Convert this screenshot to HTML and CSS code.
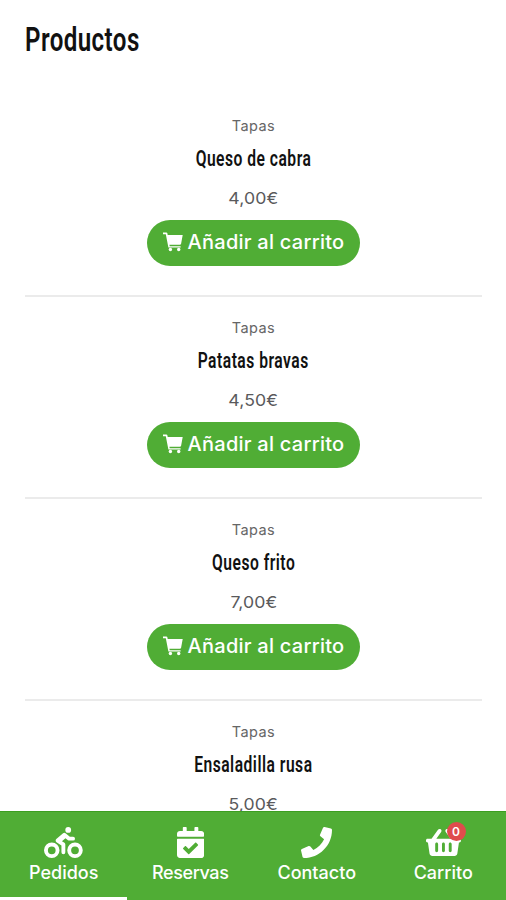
FILE: index.html
```html
<!DOCTYPE html>
<html lang="es">
<head>
<meta charset="utf-8">
<title>Productos</title>
<link rel="stylesheet" href="styles.css">
</head>
<body>
<svg class="sprite" aria-hidden="true">
  <symbol id="cart" viewBox="0 0 20 20"><path d="M0 .4H3.4Q4.1.4 4.3 1.1L4.7 3H19.7L18.1 11.8Q17.9 12.8 16.8 12.8H6.4L6.7 14.2H17.6V15.4H5.4L2.8 2.2H0Z"/><circle cx="7.4" cy="17.5" r="1.7"/><circle cx="15.7" cy="17.5" r="1.7"/></symbol>
</svg>
<main class="page">
  <h1 class="title"><span>Productos</span></h1>
  <article class="product">
    <p class="category">Tapas</p>
    <h2 class="name"><span>Queso de cabra</span></h2>
    <p class="price">4,00€</p>
    <button class="add"><svg><use href="#cart"/></svg><span>Añadir al carrito</span></button>
  </article>
  <article class="product">
    <p class="category">Tapas</p>
    <h2 class="name"><span>Patatas bravas</span></h2>
    <p class="price">4,50€</p>
    <button class="add"><svg><use href="#cart"/></svg><span>Añadir al carrito</span></button>
  </article>
  <article class="product">
    <p class="category">Tapas</p>
    <h2 class="name"><span>Queso frito</span></h2>
    <p class="price">7,00€</p>
    <button class="add"><svg><use href="#cart"/></svg><span>Añadir al carrito</span></button>
  </article>
  <article class="product">
    <p class="category">Tapas</p>
    <h2 class="name"><span>Ensaladilla rusa</span></h2>
    <p class="price">5,00€</p>
  </article>
</main>
<nav class="tabs">
  <a class="tab active">
    <svg class="icon" viewBox="0 0 640 512"><path d="M400 96a48 48 0 1 0-48-48 48 48 0 0 0 48 48zm-4 121a31.9 31.9 0 0 0 20 7h64a32 32 0 0 0 0-64h-52.78L356 103a31.94 31.94 0 0 0-40.81.68l-112 96a32 32 0 0 0 3.08 50.92L288 305.12V416a32 32 0 0 0 64 0V288a32 32 0 0 0-14.25-26.62l-41.36-27.57 58.25-49.92zm116 39a128 128 0 1 0 128 128 128 128 0 0 0-128-128zm0 192a64 64 0 1 1 64-64 64 64 0 0 1-64 64zM128 256a128 128 0 1 0 128 128 128 128 0 0 0-128-128zm0 192a64 64 0 1 1 64-64 64 64 0 0 1-64 64z"/></svg>
    <span>Pedidos</span>
  </a>
  <a class="tab">
    <svg class="icon" viewBox="0 0 448 512"><path d="M436 160H12c-6.627 0-12-5.373-12-12v-36c0-26.51 21.49-48 48-48h48V12c0-6.627 5.373-12 12-12h40c6.627 0 12 5.373 12 12v52h128V12c0-6.627 5.373-12 12-12h40c6.627 0 12 5.373 12 12v52h48c26.51 0 48 21.49 48 48v36c0 6.627-5.373 12-12 12zM12 192h424c6.627 0 12 5.373 12 12v260c0 26.51-21.49 48-48 48H48c-26.51 0-48-21.49-48-48V204c0-6.627 5.373-12 12-12zm333.296 95.947l-28.169-28.398c-4.667-4.705-12.265-4.736-16.97-.068L194.12 364.665l-45.98-46.352c-4.667-4.705-12.266-4.736-16.971-.068l-28.397 28.17c-4.705 4.667-4.736 12.265-.068 16.97l82.601 83.269c4.667 4.705 12.265 4.736 16.97.068l142.953-141.805c4.705-4.667 4.736-12.265.068-16.97z"/></svg>
    <span class="tight">Reservas</span>
  </a>
  <a class="tab">
    <svg class="icon" viewBox="0 0 512 512"><path d="M493.4 24.6l-104-24c-11.3-2.6-22.9 3.3-27.5 13.9l-48 112c-4.2 9.8-1.4 21.3 6.9 28l60.6 49.6c-36 76.7-98.9 140.5-177.2 177.2l-49.6-60.6c-6.8-8.3-18.2-11.1-28-6.9l-112 48C3.9 366.5-2 378.1.6 389.4l24 104C27.1 504.2 36.7 512 48 512c256.1 0 464-207.5 464-464 0-11.2-7.7-20.9-18.6-23.4z"/></svg>
    <span>Contacto</span>
  </a>
  <a class="tab">
    <svg class="icon" viewBox="0 0 576 512"><path d="M576 216v16c0 13.255-10.745 24-24 24h-8l-26.113 182.788C514.509 462.435 494.257 480 470.37 480H105.63c-23.887 0-44.139-17.565-47.518-41.212L32 256h-8c-13.255 0-24-10.745-24-24v-16c0-13.255 10.745-24 24-24h67.341l106.78-146.821c10.395-14.292 30.407-17.453 44.701-7.058 14.293 10.395 17.453 30.408 7.058 44.701L170.477 192h235.046L326.12 82.821c-10.395-14.292-7.234-34.306 7.059-44.701 14.291-10.395 34.306-7.235 44.701 7.058L484.659 192H552c13.255 0 24 10.745 24 24zM312 392V280c0-13.255-10.745-24-24-24s-24 10.745-24 24v112c0 13.255 10.745 24 24 24s24-10.745 24-24zm112 0V280c0-13.255-10.745-24-24-24s-24 10.745-24 24v112c0 13.255 10.745 24 24 24s24-10.745 24-24zm-224 0V280c0-13.255-10.745-24-24-24s-24 10.745-24 24v112c0 13.255 10.745 24 24 24s24-10.745 24-24z"/></svg>
    <span>Carrito</span>
    <b class="badge">0</b>
  </a>
</nav>
</body>
</html>
```
FILE: styles.css
```css
* { box-sizing: border-box; margin: 0; padding: 0; }
html, body { height: 900px; overflow: hidden; }
body { display: flex; flex-direction: column; background: #fff; font-family: Inter, sans-serif; color: #5a5a5c; }
.sprite { display: none; }
.page { flex: none; height: 811px; overflow: hidden; padding: 20px 24px 0 25px; }
.title { height: 75px; font: 600 33px/40px Roboto, sans-serif; color: #111; }
.title span { display: inline-block; transform: scaleX(.73); transform-origin: left; letter-spacing: .6px; }
.product { height: 202px; padding-top: 20px; border-bottom: 2px solid #ebebeb; display: flex; flex-direction: column; align-items: center; }
.category { font-size: 14.5px; line-height: 22px; letter-spacing: .4px; color: #666; }
.name { margin-top: 9px; font: 600 22px/26px Roboto, sans-serif; color: #111; }
.name span { display: inline-block; transform: scaleX(.71); letter-spacing: .7px; }
.price { margin-top: 15px; font-size: 16.5px; line-height: 22px; letter-spacing: .1px; transform: scaleX(1.07); }
.add { margin-top: 11px; flex: none; width: 213px; height: 46px; padding-bottom: 2px; border: 0; border-radius: 23px; background: #50ad35; color: #fff; font: 500 20px/24px Inter, sans-serif; letter-spacing: .25px; display: flex; align-items: center; justify-content: center; gap: 5px; white-space: nowrap; }
.add svg { width: 20px; height: 20px; fill: #fff; }
.tabs { height: 89px; display: grid; grid-template-columns: repeat(4, 1fr); background: #50ad35; border-top: 1px solid #3c9e20; }
.tab { position: relative; display: flex; flex-direction: column; align-items: center; padding: 15px 0 0 1px; color: #fff; font-size: 18px; font-weight: 500; line-height: 24px; }
.tab.active { border-bottom: 3px solid #fff; }
.icon { height: 31px; margin-bottom: 3px; fill: #fff; }
.tight { letter-spacing: -.4px; }
.badge { position: absolute; left: 67px; top: 10px; width: 19px; height: 19px; border-radius: 50%; background: #df4c4c; font-size: 12px; font-weight: 600; line-height: 19px; text-align: center; }
```
